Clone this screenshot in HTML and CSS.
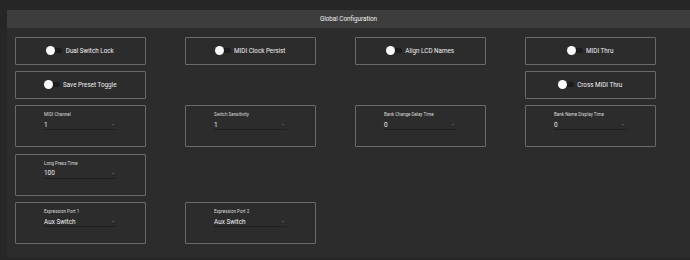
FILE: index.html
```html
<!DOCTYPE html>
<html lang="en">

<head>
    <meta charset="UTF-8">
    <meta name="viewport" content="width=device-width, initial-scale=1.0">
    <title>Global Configuration</title>
    <link rel="stylesheet" href="styles.css">
</head>

<body>
    <div class="panel">
        <div class="panel-header">Global Configuration</div>
        <div class="config-grid">
            <!-- toggles -->
            <div class="card toggle-card">
                <span class="toggle"><span class="thumb"></span></span>
                <span class="toggle-label">Dual Switch Lock</span>
            </div>
            <div class="card toggle-card">
                <span class="toggle"><span class="thumb"></span></span>
                <span class="toggle-label">MIDI Clock Persist</span>
            </div>
            <div class="card toggle-card">
                <span class="toggle"><span class="thumb"></span></span>
                <span class="toggle-label">Align LCD Names</span>
            </div>
            <div class="card toggle-card">
                <span class="toggle"><span class="thumb"></span></span>
                <span class="toggle-label">MIDI Thru</span>
            </div>

            <div class="card toggle-card">
                <span class="toggle"><span class="thumb"></span></span>
                <span class="toggle-label">Save Preset Toggle</span>
            </div>
            <div class="card toggle-card col-4">
                <span class="toggle"><span class="thumb"></span></span>
                <span class="toggle-label">Cross MIDI Thru</span>
            </div>

            <!-- selects -->
            <div class="card select-card col-1">
                <div class="field">
                    <div class="field-label">MIDI Channel</div>
                    <div class="field-value"><span>1</span><span class="arrow"></span></div>
                </div>
            </div>
            <div class="card select-card">
                <div class="field">
                    <div class="field-label">Switch Sensitivity</div>
                    <div class="field-value"><span>1</span><span class="arrow"></span></div>
                </div>
            </div>
            <div class="card select-card">
                <div class="field">
                    <div class="field-label">Bank Change Delay Time</div>
                    <div class="field-value"><span>0</span><span class="arrow"></span></div>
                </div>
            </div>
            <div class="card select-card">
                <div class="field">
                    <div class="field-label">Bank Name Display Time</div>
                    <div class="field-value"><span>0</span><span class="arrow"></span></div>
                </div>
            </div>

            <div class="card select-card col-1">
                <div class="field">
                    <div class="field-label">Long Press Time</div>
                    <div class="field-value"><span>100</span><span class="arrow"></span></div>
                </div>
            </div>

            <div class="card select-card col-1">
                <div class="field">
                    <div class="field-label">Expression Port 1</div>
                    <div class="field-value"><span>Aux Switch</span><span class="arrow"></span></div>
                </div>
            </div>
            <div class="card select-card">
                <div class="field">
                    <div class="field-label">Expression Port 2</div>
                    <div class="field-value"><span>Aux Switch</span><span class="arrow"></span></div>
                </div>
            </div>
        </div>
    </div>
</body>

</html>
```

FILE: styles.css
```css
html,
body {
    margin: 0;
    height: 100%;
}

body {
    font-family: 'Roboto', 'Liberation Sans', sans-serif;
    background-color: #262626;
    color: #ececec;
    padding-left: 7px;
    padding-top: 10px;
    box-sizing: border-box;
    overflow: hidden;
}

.panel {
    background-color: #2c2c2c;
    height: 248px;
}

.panel-header {
    height: 18px;
    line-height: 18px;
    background-color: #3d3d3d;
    text-align: center;
    font-size: 6.3px;
    color: #f2f2f2;
}

.config-grid {
    display: grid;
    grid-template-columns: repeat(4, 131px);
    column-gap: 39px;
    row-gap: 6.6px;
    padding: 9px 0 0 8px;
}

.card {
    box-sizing: border-box;
    border: 1px solid #6a6a6a;
    border-radius: 1px;
}

.col-1 {
    grid-column: 1;
}

.col-4 {
    grid-column: 4;
}

/* slide toggles */
.toggle-card {
    height: 27.5px;
    display: flex;
    align-items: center;
    justify-content: center;
    gap: 3.5px;
}

.toggle {
    position: relative;
    width: 15px;
    height: 5px;
    border-radius: 3px;
    background-color: #1c1c1c;
}

.thumb {
    position: absolute;
    left: -1px;
    top: -2px;
    width: 9px;
    height: 9px;
    border-radius: 50%;
    background-color: #fafafa;
}

.toggle-label {
    font-size: 6.3px;
    color: #f0f0f0;
}

/* selects */
.select-card {
    height: 42px;
    padding: 6px 28px 0 28px;
}

.field-label {
    font-size: 4.5px;
    line-height: 5px;
    color: #dcdcdc;
}

.field-value {
    display: flex;
    justify-content: space-between;
    align-items: center;
    padding: 3px 3px 0 0;
    height: 9px;
    font-size: 6.4px;
    line-height: 8px;
    color: #f2f2f2;
    border-bottom: 1px solid #1f1f1f;
}

.arrow {
    width: 0;
    height: 0;
    border-left: 1.8px solid transparent;
    border-right: 1.8px solid transparent;
    border-top: 1.8px solid #7a7a7a;
}
```
